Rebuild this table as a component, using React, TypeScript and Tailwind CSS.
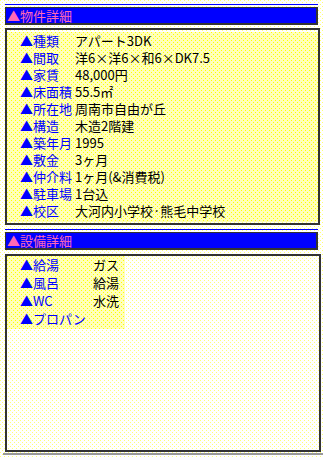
import React from 'react';

const dots =
  'bg-[image:conic-gradient(from_270deg_at_1px_1px,#ffff77_25%,transparent_0),conic-gradient(from_270deg_at_1px_1px,#ffff77_25%,transparent_0)] bg-[size:4px_4px] bg-[position:0_0,2px_2px]';

const tableDots =
  'bg-[image:conic-gradient(from_270deg_at_1px_1px,#ffff00_25%,transparent_0),conic-gradient(from_270deg_at_1px_1px,#ffff00_25%,transparent_0)] bg-[size:4px_4px] bg-[position:0_0,2px_2px]';

const bukken: [string, string][] = [
  ['種類', 'アパート3DK'],
  ['間取', '洋6×洋6×和6×DK7.5'],
  ['家賃', '48,000円'],
  ['床面積', '55.5㎡'],
  ['所在地', '周南市自由が丘'],
  ['構造', '木造2階建'],
  ['築年月', '1995'],
  ['敷金', '3ヶ月'],
  ['仲介料', '1ヶ月(&消費税)'],
  ['駐車場', '1台込'],
  ['校区', '大河内小学校·熊毛中学校'],
];

const setsubi: [string, string][] = [
  ['給湯', 'ガス'],
  ['風呂', '給湯'],
  ['WC', '水洗'],
  ['プロパン', ''],
];

const Header: React.FC<{ title: string }> = ({ title }) => (
  <>
    <div className="ml-[5px] w-[313px] h-px bg-[#0000ff]" />
    <div className="mt-[2px] ml-[5px] w-[313px] h-[18px] bg-[#0000ff] border border-[#333] border-r-2 border-b-2 flex items-center pl-[1px] text-[13px] leading-[16px] text-[#ff69b4]">
      ▲{title}
    </div>
  </>
);

export default function App() {
  return (
    <div
      className={`w-[323px] h-[458px] overflow-hidden bg-white ${dots} pt-[4px] font-['Noto_Sans_CJK_JP','Noto_Sans',sans-serif]`}
    >
      <Header title="物件詳細" />

      <div className="mt-[3px] ml-[5px] w-[315px] h-[197px] border-2 border-[#333] pt-[2px]">
        <div className={`bg-[#ffffbb] ${tableDots}`}>
          {bukken.map(([label, value]) => (
            <div key={label} className="flex items-center h-[17px] text-[13px] leading-[17px]">
              <div className="w-[68px] pl-[13px] text-[#0000ff] whitespace-nowrap">▲{label}</div>
              <div className="text-black whitespace-nowrap">{value}</div>
            </div>
          ))}
          <div className="h-[3px]" />
        </div>
      </div>

      <div className="mt-[4px]">
        <Header title="設備詳細" />
      </div>

      <div className="mt-[4px] ml-[5px] w-[316px] h-[198px] border-2 border-[#333]">
        <div className={`w-[118px] bg-[#ffffbb] ${tableDots} pb-[1px]`}>
          {setsubi.map(([label, value]) => (
            <div key={label} className="flex items-center h-[18px] text-[13px] leading-[18px]">
              <div className="w-[86px] pl-[13px] text-[#0000ff] whitespace-nowrap">▲{label}</div>
              <div className="text-black whitespace-nowrap">{value}</div>
            </div>
          ))}
        </div>
      </div>

      <div className="ml-[3px] mt-px h-[2px] w-[320px] bg-[#999]" />
    </div>
  );
}
